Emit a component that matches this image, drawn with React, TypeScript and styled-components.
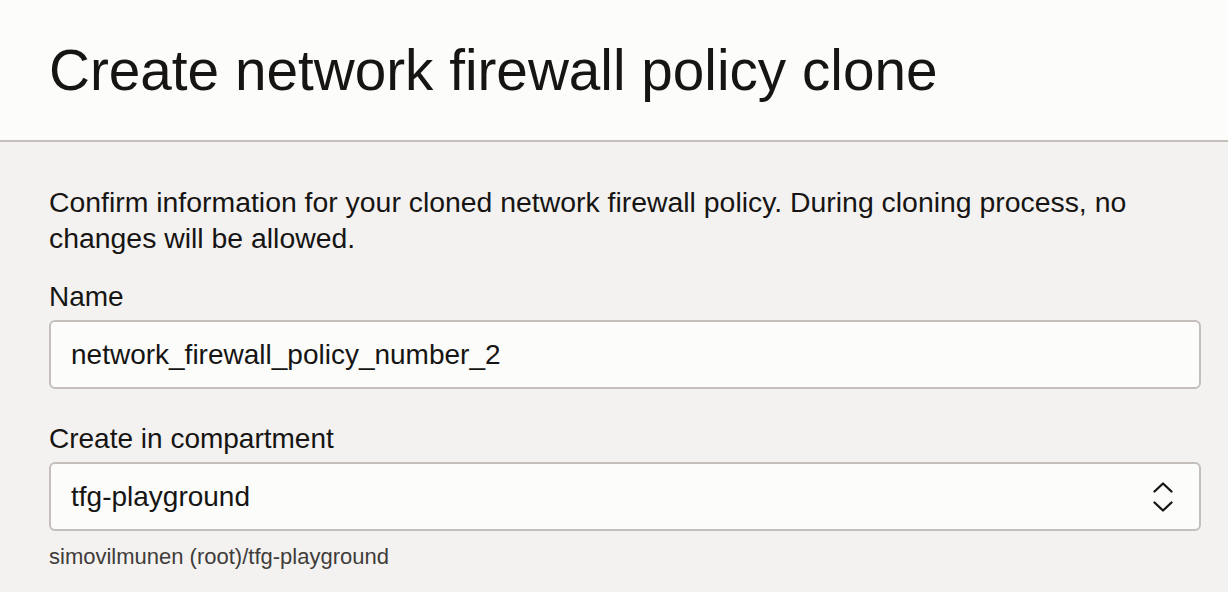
import { createGlobalStyle, styled } from "styled-components";

const Global = createGlobalStyle`
  html, body {
    margin: 0;
    padding: 0;
    background: #f3f2f1;
    font-family: "Liberation Sans", Arial, sans-serif;
    color: #161513;
  }
`;

const Header = styled.header`
  background: #fcfcfb;
  height: 140px;
  border-bottom: 2px solid #c4bfba;
  display: flex;
  align-items: center;
  padding: 0 49px;
`;

const Title = styled.h1`
  margin: 0;
  font-size: 56.7px;
  font-weight: 400;
  line-height: 1;
  padding-top: 2px;
`;

const Body = styled.main`
  padding: 42px 27px 0 49px;
  display: flex;
  flex-direction: column;
`;

const Intro = styled.p`
  margin: 0 0 23px;
  font-size: 28.4px;
  line-height: 36px;
`;

const Field = styled.div<{ $gap?: number }>`
  display: flex;
  flex-direction: column;
  margin-bottom: ${(p) => p.$gap ?? 0}px;
`;

const Label = styled.label`
  font-size: 28px;
  line-height: 36px;
  margin-bottom: 5px;
`;

const Box = styled.div`
  height: 65px;
  border: 2px solid #c4bfba;
  border-radius: 6px;
  background: #fcfcfb;
  display: flex;
  align-items: center;
  justify-content: space-between;
  padding: 0 26px 0 20px;
  font-size: 28px;
`;

const Hint = styled.div`
  font-size: 22px;
  line-height: 26px;
  color: #3f3c39;
  margin-top: 13px;
`;

const Chevrons = () => (
  <svg width="20" height="30" viewBox="0 0 20 30" fill="none" stroke="#161513" strokeWidth="2.3" strokeLinecap="round" strokeLinejoin="round">
    <polyline points="1.5,9.5 10,1.5 18.5,9.5" />
    <polyline points="1.5,20.5 10,28.5 18.5,20.5" />
  </svg>
);

export default function App() {
  return (
    <>
      <Global />
      <Header>
        <Title>Create network firewall policy clone</Title>
      </Header>
      <Body>
        <Intro>
          Confirm information for your cloned network firewall policy. During cloning process, no changes will be allowed.
        </Intro>
        <Field $gap={32}>
          <Label>Name</Label>
          <Box>network_firewall_policy_number_2</Box>
        </Field>
        <Field>
          <Label>Create in compartment</Label>
          <Box>
            tfg-playground
            <Chevrons />
          </Box>
          <Hint>simovilmunen (root)/tfg-playground</Hint>
        </Field>
      </Body>
    </>
  );
}
